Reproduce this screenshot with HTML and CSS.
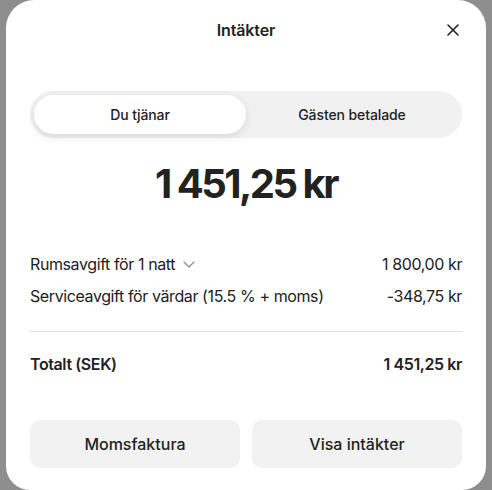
FILE: index.html
```html
<!DOCTYPE html>
<html lang="sv">
<head>
<meta charset="utf-8">
<title>Intäkter</title>
<link rel="stylesheet" href="styles.css">
</head>
<body>
<div class="modal">
  <header class="header">
    <span></span>
    <h1 class="title">Intäkter</h1>
    <button class="close" aria-label="Stäng">
      <svg width="12" height="12" viewBox="0 0 12 12"><path d="M1 1 L11 11 M11 1 L1 11" stroke="#222" stroke-width="1.6" fill="none" stroke-linecap="round"/></svg>
    </button>
  </header>
  <div class="segmented">
    <button class="seg active">Du tjänar</button>
    <button class="seg">Gästen betalade</button>
  </div>
  <div class="amount">1&nbsp;451,25&nbsp;kr</div>
  <div class="rows">
    <div class="row">
      <span class="label">Rumsavgift för 1&nbsp;natt
        <svg class="chev" width="12" height="7" viewBox="0 0 12 7"><path d="M1 1 L6 6 L11 1" stroke="#8a8a8a" stroke-width="1.2" fill="none" stroke-linecap="round" stroke-linejoin="round"/></svg>
      </span>
      <span>1&nbsp;800,00&nbsp;kr</span>
    </div>
    <div class="row">
      <span>Serviceavgift för värdar (15.5&nbsp;% + moms)</span>
      <span>-348,75&nbsp;kr</span>
    </div>
  </div>
  <hr class="divider">
  <div class="row total">
    <span>Totalt (SEK)</span>
    <span>1&nbsp;451,25&nbsp;kr</span>
  </div>
  <div class="actions">
    <button class="btn">Momsfaktura</button>
    <button class="btn">Visa intäkter</button>
  </div>
</div>
</body>
</html>
```
FILE: styles.css
```css
* { box-sizing: border-box; }
html, body { margin: 0; padding: 0; }
body {
  background: #8e8e8e;
  font-family: Inter, "Noto Sans", "Liberation Sans", sans-serif;
  color: #222222;
  width: 492px;
  height: 490px;
  overflow: hidden;
}
.modal {
  margin-left: 6px;
  width: 480px;
  height: 490px;
  background: #ffffff;
  border-radius: 28px 28px 24px 24px;
  display: flex;
  flex-direction: column;
  padding: 0 24px 22px;
}
.header {
  height: 60px;
  display: grid;
  grid-template-columns: 1fr auto 1fr;
  align-items: center;
  margin: 0 -21px 0 -21px;
  padding: 0 24px;
}
.title {
  margin: 0;
  font-size: 16px;
  font-weight: 600;
  letter-spacing: -0.1px;
}
.close {
  justify-self: end;
  border: 0;
  background: none;
  padding: 0;
  width: 12px;
  height: 12px;
  display: flex;
}
.segmented {
  margin-top: 31px;
  height: 47px;
  padding: 4px;
  border-radius: 24px;
  background: #f1f1f1;
  display: grid;
  grid-template-columns: 1fr 1fr;
}
.seg {
  border: 0;
  background: transparent;
  border-radius: 20px;
  font-family: inherit;
  font-size: 14px;
  font-weight: 500;
  color: #222;
  letter-spacing: -0.1px;
}
.seg.active {
  background: #ffffff;
  box-shadow: 0 3px 10px rgba(0,0,0,0.10);
}
.amount {
  margin-top: 22px;
  text-align: center;
  font-size: 40px;
  line-height: 48px;
  font-weight: 700;
  letter-spacing: -2.5px;
}
.rows {
  margin-top: 44px;
  display: flex;
  flex-direction: column;
  gap: 8px;
}
.row {
  display: flex;
  justify-content: space-between;
  align-items: center;
  font-size: 16px;
  line-height: 24px;
  letter-spacing: -0.4px;
}
.label { display: inline-flex; align-items: center; gap: 8px; }
.chev { margin-top: 1px; }
.divider {
  margin: 23px 0 20px;
  border: 0;
  height: 1px;
  background: #dddddd;
}
.total { font-weight: 600; }
.actions {
  margin-top: auto;
  display: grid;
  grid-template-columns: 1fr 1fr;
  gap: 12px;
}
.btn {
  height: 48px;
  border: 0;
  border-radius: 10px;
  background: #f2f2f2;
  font-family: inherit;
  font-size: 16px;
  font-weight: 500;
  color: #222;
}
```
